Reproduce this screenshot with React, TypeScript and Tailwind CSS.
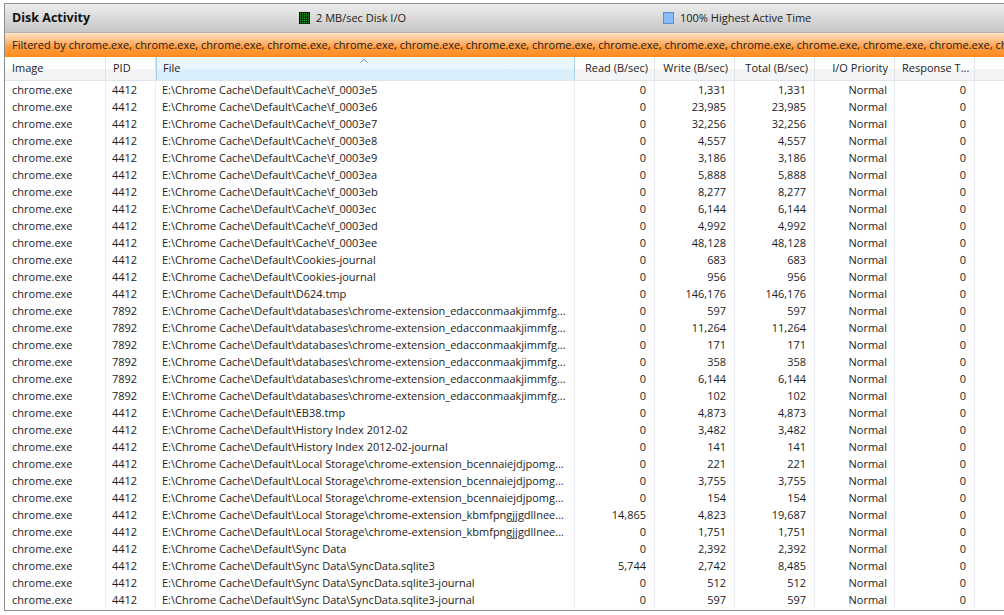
const font = "font-['Open_Sans',sans-serif]";

type Row = [string, string, string, string, string, string];

const ext1 = 'E:\\Chrome Cache\\Default\\databases\\chrome-extension_edacconmaakjimmfg...';
const ext2 = 'E:\\Chrome Cache\\Default\\Local Storage\\chrome-extension_bcennaiejdjpomg...';
const ext3 = 'E:\\Chrome Cache\\Default\\Local Storage\\chrome-extension_kbmfpngjjgdllnee...';
const base = 'E:\\Chrome Cache\\Default\\';

const rows: Row[] = [
  ['4412', base + 'Cache\\f_0003e5', '0', '1,331', '1,331', '0'],
  ['4412', base + 'Cache\\f_0003e6', '0', '23,985', '23,985', '0'],
  ['4412', base + 'Cache\\f_0003e7', '0', '32,256', '32,256', '0'],
  ['4412', base + 'Cache\\f_0003e8', '0', '4,557', '4,557', '0'],
  ['4412', base + 'Cache\\f_0003e9', '0', '3,186', '3,186', '0'],
  ['4412', base + 'Cache\\f_0003ea', '0', '5,888', '5,888', '0'],
  ['4412', base + 'Cache\\f_0003eb', '0', '8,277', '8,277', '0'],
  ['4412', base + 'Cache\\f_0003ec', '0', '6,144', '6,144', '0'],
  ['4412', base + 'Cache\\f_0003ed', '0', '4,992', '4,992', '0'],
  ['4412', base + 'Cache\\f_0003ee', '0', '48,128', '48,128', '0'],
  ['4412', base + 'Cookies-journal', '0', '683', '683', '0'],
  ['4412', base + 'Cookies-journal', '0', '956', '956', '0'],
  ['4412', base + 'D624.tmp', '0', '146,176', '146,176', '0'],
  ['7892', ext1, '0', '597', '597', '0'],
  ['7892', ext1, '0', '11,264', '11,264', '0'],
  ['7892', ext1, '0', '171', '171', '0'],
  ['7892', ext1, '0', '358', '358', '0'],
  ['7892', ext1, '0', '6,144', '6,144', '0'],
  ['7892', ext1, '0', '102', '102', '0'],
  ['4412', base + 'EB38.tmp', '0', '4,873', '4,873', '0'],
  ['4412', base + 'History Index 2012-02', '0', '3,482', '3,482', '0'],
  ['4412', base + 'History Index 2012-02-journal', '0', '141', '141', '0'],
  ['4412', ext2, '0', '221', '221', '0'],
  ['4412', ext2, '0', '3,755', '3,755', '0'],
  ['4412', ext2, '0', '154', '154', '0'],
  ['4412', ext3, '14,865', '4,823', '19,687', '0'],
  ['4412', ext3, '0', '1,751', '1,751', '0'],
  ['4412', base + 'Sync Data', '0', '2,392', '2,392', '0'],
  ['4412', base + 'Sync Data\\SyncData.sqlite3', '5,744', '2,742', '8,485', '0'],
  ['4412', base + 'Sync Data\\SyncData.sqlite3-journal', '0', '512', '512', '0'],
  ['4412', base + 'Sync Data\\SyncData.sqlite3-journal', '0', '597', '597', '0'],
];

function GraphSwatch() {
  return (
    <svg width="11" height="12" viewBox="0 0 11 12" className="shrink-0">
      <rect x="0" y="0" width="11" height="12" fill="#0b0b0b" />
      {Array.from({ length: 5 }).map((_, r) =>
        Array.from({ length: 5 }).map((_, c) => (
          <rect key={`${r}-${c}`} x={1 + c * 2} y={1 + r * 2.2} width="1.2" height="1.4" fill="#1faa1f" />
        ))
      )}
    </svg>
  );
}

function HeaderCell({ label, className, right }: { label: string; className: string; right?: boolean }) {
  return (
    <div
      className={`h-full flex items-center border-r border-[#e2e4e7] bg-gradient-to-b from-white from-50% to-[#f3f4f6] to-50% ${right ? 'justify-end pr-[6px]' : 'pl-[7px]'} ${className}`}
    >
      <span className="whitespace-nowrap overflow-hidden">{label}</span>
    </div>
  );
}

export default function App() {
  const filter = Array.from({ length: 16 }).map(() => 'chrome.exe').join(', ');

  return (
    <div className={`w-[1004px] h-[615px] bg-white overflow-hidden pt-[3px] pl-[4px] ${font} text-[11px] text-[#1c1c1c]`}>
      <div className="h-[608px] border-l border-t border-b border-[#8c8c8c] flex flex-col overflow-hidden">
        {/* title bar */}
        <div className="h-[29px] shrink-0 flex items-center bg-gradient-to-b from-[#ededed] to-[#c6c6c6] border-b border-[#b5b5b5]">
          <div className="w-[294px] pl-[7px] font-bold text-[12.5px] text-[#111]">Disk Activity</div>
          <div className="w-[364px] flex items-center gap-[6px]">
            <GraphSwatch />
            <span>2 MB/sec Disk I/O</span>
          </div>
          <div className="flex items-center gap-[6px]">
            <span className="w-[11px] h-[12px] bg-[#86bdf8] border border-[#5e8fc9] shrink-0" />
            <span>100% Highest Active Time</span>
          </div>
        </div>

        {/* filter bar */}
        <div className="h-[24px] shrink-0 flex items-center pl-[7px] whitespace-nowrap overflow-hidden bg-gradient-to-b from-[#fde2c4] via-[#ff9c3c] via-60% to-[#ff8a1c] text-[#1a1a1a]">
          Filtered by {filter}
        </div>

        {/* column headers */}
        <div className="h-[24px] shrink-0 flex border-b border-[#e0e3e7] text-[#222]">
          <HeaderCell label="Image" className="w-[101px]" />
          <HeaderCell label="PID" className="w-[50px]" />
          <div className="relative w-[419px] h-full flex items-center pl-[6px] border-l border-r border-[#a7d3f1] bg-gradient-to-b from-[#eaf6fd] from-50% to-[#d9f0fc] to-50%">
            <svg width="8" height="4" viewBox="0 0 8 4" className="absolute left-[203px] top-[2px]">
              <path d="M0.5 3.5 L4 0.5 L7.5 3.5" fill="none" stroke="#7a96b4" strokeWidth="1" />
            </svg>
            File
          </div>
          <HeaderCell label="Read (B/sec)" className="w-[80px]" right />
          <HeaderCell label="Write (B/sec)" className="w-[80px]" right />
          <HeaderCell label="Total (B/sec)" className="w-[80px]" right />
          <HeaderCell label="I/O Priority" className="w-[80px]" right />
          <HeaderCell label="Response T..." className="w-[80px]" />
          <div className="flex-1 h-full bg-gradient-to-b from-white from-50% to-[#f3f4f6] to-50%" />
        </div>

        {/* rows */}
        <div className="flex-1 flex flex-col">
          {rows.map((r, i) => (
            <div key={i} className="h-[17px] shrink-0 flex leading-[17px]">
              <div className="w-[101px] pl-[7px] border-r border-[#eaeef4]">chrome.exe</div>
              <div className="w-[50px] pl-[6px] border-r border-[#eaeef4]">{r[0]}</div>
              <div className="w-[419px] pl-[6px] pr-[4px] border-r border-[#eaeef4] whitespace-nowrap overflow-hidden text-ellipsis">{r[1]}</div>
              <div className="w-[80px] pr-[8px] text-right border-r border-[#eaeef4]">{r[2]}</div>
              <div className="w-[80px] pr-[8px] text-right border-r border-[#eaeef4]">{r[3]}</div>
              <div className="w-[80px] pr-[8px] text-right border-r border-[#eaeef4]">{r[4]}</div>
              <div className="w-[80px] pr-[7px] text-right border-r border-[#eaeef4]">Normal</div>
              <div className="w-[80px] pr-[8px] text-right border-r border-[#eaeef4]">{r[5]}</div>
              <div className="flex-1" />
            </div>
          ))}
        </div>
      </div>
    </div>
  );
}
